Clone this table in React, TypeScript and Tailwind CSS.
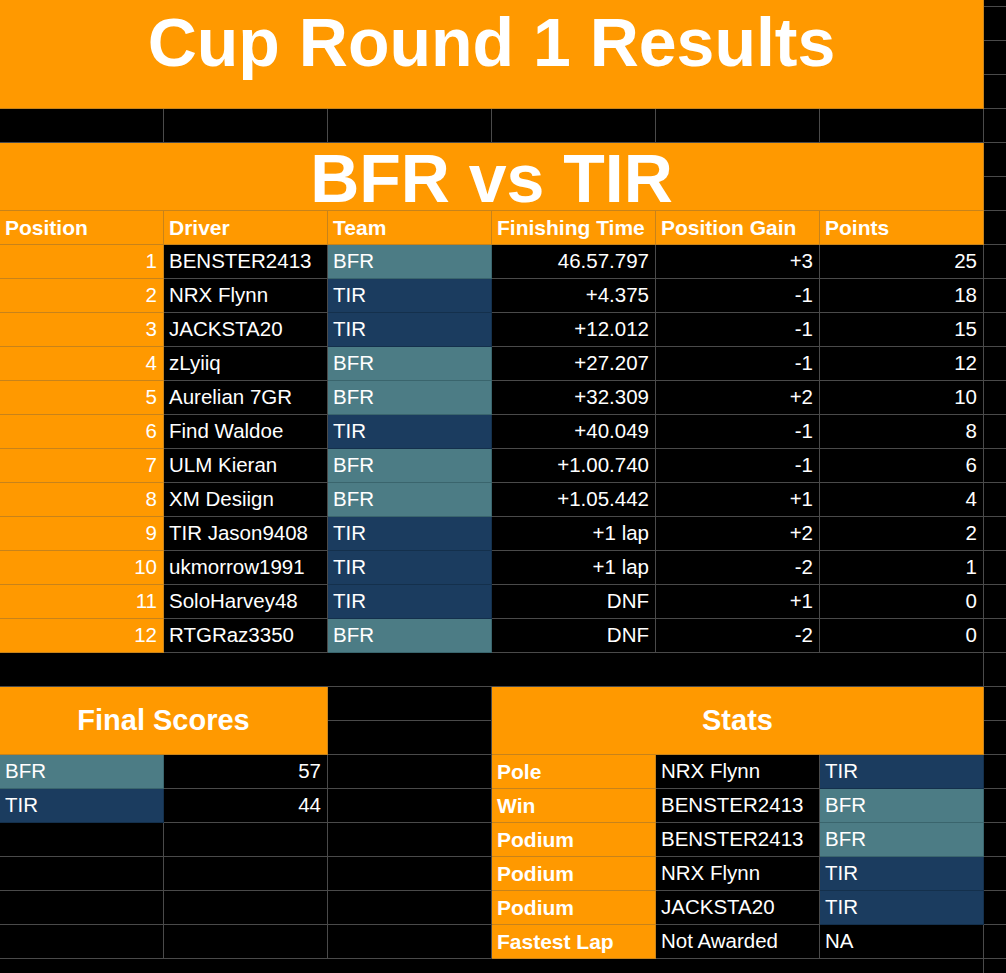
import type { ReactNode } from 'react';

type Tone = 'black' | 'orange' | 'BFR' | 'TIR';

interface ResultRow {
  pos: number;
  driver: string;
  team: 'BFR' | 'TIR';
  time: string;
  gain: string;
  points: number;
}

const results: ResultRow[] = [
  { pos: 1, driver: 'BENSTER2413', team: 'BFR', time: '46.57.797', gain: '+3', points: 25 },
  { pos: 2, driver: 'NRX Flynn', team: 'TIR', time: '+4.375', gain: '-1', points: 18 },
  { pos: 3, driver: 'JACKSTA20', team: 'TIR', time: '+12.012', gain: '-1', points: 15 },
  { pos: 4, driver: 'zLyiiq', team: 'BFR', time: '+27.207', gain: '-1', points: 12 },
  { pos: 5, driver: 'Aurelian 7GR', team: 'BFR', time: '+32.309', gain: '+2', points: 10 },
  { pos: 6, driver: 'Find Waldoe', team: 'TIR', time: '+40.049', gain: '-1', points: 8 },
  { pos: 7, driver: 'ULM Kieran', team: 'BFR', time: '+1.00.740', gain: '-1', points: 6 },
  { pos: 8, driver: 'XM Desiign', team: 'BFR', time: '+1.05.442', gain: '+1', points: 4 },
  { pos: 9, driver: 'TIR Jason9408', team: 'TIR', time: '+1 lap', gain: '+2', points: 2 },
  { pos: 10, driver: 'ukmorrow1991', team: 'TIR', time: '+1 lap', gain: '-2', points: 1 },
  { pos: 11, driver: 'SoloHarvey48', team: 'TIR', time: 'DNF', gain: '+1', points: 0 },
  { pos: 12, driver: 'RTGRaz3350', team: 'BFR', time: 'DNF', gain: '-2', points: 0 },
];

const stats: { label: string; driver: string; team: Tone; teamText: string }[] = [
  { label: 'Pole', driver: 'NRX Flynn', team: 'TIR', teamText: 'TIR' },
  { label: 'Win', driver: 'BENSTER2413', team: 'BFR', teamText: 'BFR' },
  { label: 'Podium', driver: 'BENSTER2413', team: 'BFR', teamText: 'BFR' },
  { label: 'Podium', driver: 'NRX Flynn', team: 'TIR', teamText: 'TIR' },
  { label: 'Podium', driver: 'JACKSTA20', team: 'TIR', teamText: 'TIR' },
  { label: 'Fastest Lap', driver: 'Not Awarded', team: 'black', teamText: 'NA' },
];

const toneClasses: Record<Tone, string> = {
  black: 'bg-black border-[#4a4a4a]',
  orange: 'bg-[#ff9900] border-[#c8831a]',
  BFR: 'bg-[#4c7c85] border-[#3a656d]',
  TIR: 'bg-[#1b3c5f] border-[#14304c]',
};

function Cell({
  tone = 'black',
  className = '',
  children,
}: {
  tone?: Tone;
  className?: string;
  children?: ReactNode;
}) {
  return (
    <div
      className={`flex items-center whitespace-nowrap border-r border-b text-white ${toneClasses[tone]} ${className}`}
    >
      {children}
    </div>
  );
}

// the narrow column past the sheet's right edge
function Edge() {
  return <div className="border-b border-[#4a4a4a] bg-black" />;
}

function BlackRow() {
  return (
    <>
      {[0, 1, 2, 3, 4, 5].map((i) => (
        <Cell key={i} />
      ))}
      <Edge />
    </>
  );
}

export default function App() {
  const left = 'pl-[5px] text-[20.5px]';
  const right = 'justify-end pr-[6px] text-[20.5px]';
  const head = 'pl-[5px] text-[21px] font-bold';

  return (
    <div className="h-screen overflow-hidden bg-black font-['Liberation_Sans',Arial,sans-serif]">
      <div className="grid grid-cols-[repeat(6,164px)_1fr] grid-rows-[7px_34px_34px_34px] auto-rows-[34px]">
        {/* title */}
        <Cell
          tone="orange"
          className="col-span-6 row-span-4 items-start justify-center pt-[12px] text-[68px] font-bold leading-[60px]"
        >
          Cup Round 1 Results
        </Cell>
        <Edge />
        <Edge />
        <Edge />
        <Edge />

        <BlackRow />

        {/* matchup */}
        <Cell
          tone="orange"
          className="col-span-6 row-span-2 items-start justify-center pt-[5px] text-[68px] font-bold leading-[60px]"
        >
          BFR vs TIR
        </Cell>
        <Edge />
        <Edge />

        {['Position', 'Driver', 'Team', 'Finishing Time', 'Position Gain', 'Points'].map((h) => (
          <Cell key={h} tone="orange" className={head}>
            {h}
          </Cell>
        ))}
        <Edge />

        {results.map((r) => (
          <div key={r.pos} className="contents">
            <Cell tone="orange" className={right}>
              {r.pos}
            </Cell>
            <Cell className={left}>{r.driver}</Cell>
            <Cell tone={r.team} className={left}>
              {r.team}
            </Cell>
            <Cell className={right}>{r.time}</Cell>
            <Cell className={right}>{r.gain}</Cell>
            <Cell className={right}>{r.points}</Cell>
            <Edge />
          </div>
        ))}

        <Cell className="col-span-6" />
        <Edge />

        {/* final scores + stats headers */}
        <Cell
          tone="orange"
          className="col-span-2 row-span-2 justify-center text-[29px] font-bold"
        >
          Final Scores
        </Cell>
        <Cell />
        <Cell
          tone="orange"
          className="col-span-3 row-span-2 justify-center text-[29px] font-bold"
        >
          Stats
        </Cell>
        <Edge />
        <Cell />
        <Edge />

        {stats.map((s, i) => (
          <div key={i} className="contents">
            {i === 0 && (
              <>
                <Cell tone="BFR" className={left}>
                  BFR
                </Cell>
                <Cell className={right}>57</Cell>
              </>
            )}
            {i === 1 && (
              <>
                <Cell tone="TIR" className={left}>
                  TIR
                </Cell>
                <Cell className={right}>44</Cell>
              </>
            )}
            {i > 1 && (
              <>
                <Cell />
                <Cell />
              </>
            )}
            <Cell />
            <Cell tone="orange" className={head}>
              {s.label}
            </Cell>
            <Cell className={left}>{s.driver}</Cell>
            <Cell tone={s.team} className={left}>
              {s.teamText}
            </Cell>
            <Edge />
          </div>
        ))}

        <div className="col-span-6 border-r border-[#4a4a4a] bg-black" />
        <div className="bg-black" />
      </div>
    </div>
  );
}
